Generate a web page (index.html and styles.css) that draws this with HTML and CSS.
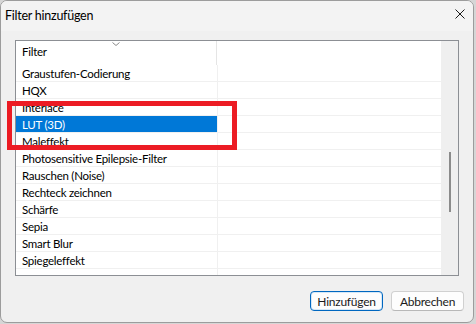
FILE: index.html
```html
<!DOCTYPE html>
<html lang="de">
<head>
    <meta charset="UTF-8">
    <title>Filter hinzufügen</title>
    <link rel="stylesheet" href="styles.css">
</head>
<body>
    <div class="window">
        <div class="titlebar">
            <span class="title">Filter hinzufügen</span>
            <svg class="close" width="10" height="10" viewBox="0 0 10 10">
                <path d="M0.5 0.5 L9.5 9.5 M9.5 0.5 L0.5 9.5" stroke="#1a1a1a" stroke-width="1" fill="none"/>
            </svg>
        </div>

        <div class="content">
            <div class="listview">
                <div class="columns">
                    <div class="header">
                        <div class="hcell name">
                            <svg class="sort" width="8" height="4" viewBox="0 0 8 4">
                                <path d="M0.5 0.5 L4 3.5 L7.5 0.5" stroke="#8a8a8a" stroke-width="1" fill="none"/>
                            </svg>
                            <span>Filter</span>
                        </div>
                        <div class="hcell rest"></div>
                    </div>
                    <div class="row"><div class="name">Graustufen-Codierung</div><div class="rest"></div></div>
                    <div class="row"><div class="name">HQX</div><div class="rest"></div></div>
                    <div class="row"><div class="name">Interlace</div><div class="rest"></div></div>
                    <div class="row selected"><div class="name">LUT (3D)</div><div class="rest"></div></div>
                    <div class="row"><div class="name">Maleffekt</div><div class="rest"></div></div>
                    <div class="row"><div class="name">Photosensitive Epilepsie-Filter</div><div class="rest"></div></div>
                    <div class="row"><div class="name">Rauschen (Noise)</div><div class="rest"></div></div>
                    <div class="row"><div class="name">Rechteck zeichnen</div><div class="rest"></div></div>
                    <div class="row"><div class="name">Schärfe</div><div class="rest"></div></div>
                    <div class="row"><div class="name">Sepia</div><div class="rest"></div></div>
                    <div class="row"><div class="name">Smart Blur</div><div class="rest"></div></div>
                    <div class="row"><div class="name">Spiegeleffekt</div><div class="rest"></div></div>
                    <div class="row"><div class="name"></div><div class="rest"></div></div>
                </div>
                <div class="scrollbar">
                    <div class="thumb"></div>
                </div>
            </div>

            <div class="footer">
                <button class="btn primary">Hinzufügen</button>
                <button class="btn">Abbrechen</button>
            </div>
        </div>

        <!-- Markierung -->
        <div class="highlight"></div>
    </div>
</body>
</html>
```

FILE: styles.css
```css
body {
    margin: 0;
    background: #d6d6d6;
    font-family: Lato, "Noto Sans", sans-serif;
    font-size: 11.5px;
    letter-spacing: -0.25px;
    color: #000;
}
.window {
    position: relative;
    width: 472px;
    height: 321px;
    border: 1px solid #9c9c9c;
    border-radius: 7px;
    background: #f0f0f0;
    overflow: hidden;
    display: flex;
    flex-direction: column;
}
.titlebar {
    height: 30px;
    flex: none;
    display: flex;
    align-items: center;
    justify-content: space-between;
    padding: 0 8px 0 4px;
    background: #f3f3f3;
}
.title {
    font-size: 12.5px;
    margin-top: -2px;
}
.close {
    margin-top: -4px;
}
.content {
    padding: 9px 0 0 14px;
}
.listview {
    width: 442px;
    height: 234px;
    border: 1px solid #8c8f94;
    background: #fff;
    display: flex;
    overflow: hidden;
}
.columns {
    width: 425px;
}
.header {
    height: 24px;
    display: flex;
}
.hcell.name {
    width: 200px;
    border-right: 1px solid #e5e5e5;
    display: flex;
    flex-direction: column;
}
.hcell.name .sort {
    align-self: center;
    margin-top: 1px;
}
.hcell.name span {
    padding-left: 6px;
    margin-top: -1px;
}
.row {
    height: 16px;
    display: flex;
    border-bottom: 1px solid #f0f0f0;
}
.row .name {
    width: 195px;
    padding: 2px 0 0 6px;
    line-height: 14px;
    white-space: nowrap;
}
.row .rest {
    flex: 1;
    border-left: 1px solid #f0f0f0;
}
.row.selected .name {
    background: #0078d7;
    color: #fff;
}
.scrollbar {
    width: 17px;
    background: #efefef;
    display: flex;
    justify-content: center;
    padding-top: 111px;
}
.thumb {
    width: 2px;
    height: 60px;
    background: #8b8b8b;
}
.footer {
    display: flex;
    justify-content: flex-end;
    gap: 8px;
    padding: 15px 9px 0 0;
}
.btn {
    width: 73px;
    height: 20px;
    padding: 0;
    font-family: Lato, "Noto Sans", sans-serif;
    font-size: 12px;
    letter-spacing: -0.25px;
    color: #1a1a1a;
    background: #fdfdfd;
    border: 1px solid #d0d0d0;
    border-bottom-color: #b8b8b8;
    border-radius: 4px;
}
.btn.primary {
    border: 1px solid #0067c0;
    box-shadow: inset 0 0 0 1px #d6e8f7;
}
.highlight {
    position: absolute;
    left: 6px;
    top: 100px;
    width: 220px;
    height: 39px;
    border: 5px solid #ec1c24;
}
```
